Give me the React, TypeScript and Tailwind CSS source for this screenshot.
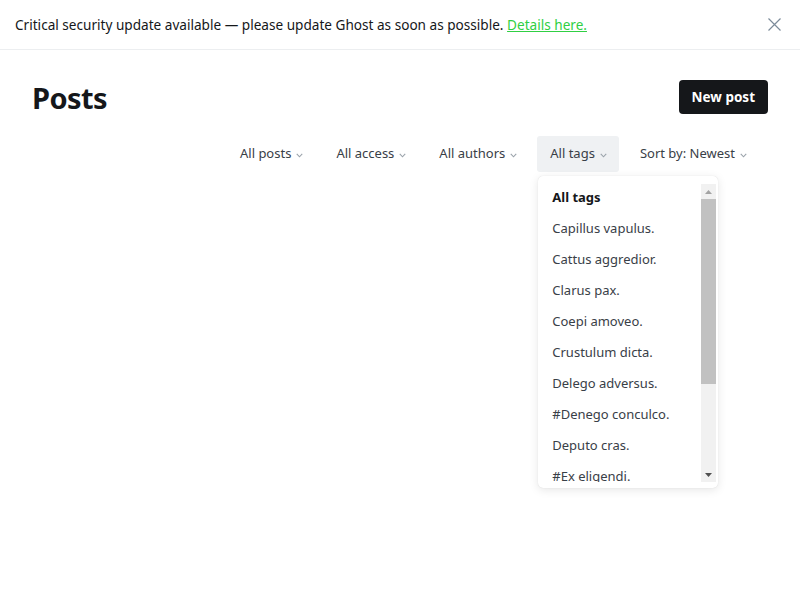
const filters = ["All posts", "All access", "All authors", "All tags", "Sort by: Newest"];

const tags = [
  "Capillus vapulus.",
  "Cattus aggredior.",
  "Clarus pax.",
  "Coepi amoveo.",
  "Crustulum dicta.",
  "Delego adversus.",
  "#Denego conculco.",
  "Deputo cras.",
  "#Ex eligendi.",
  "Fugit tempora.",
  "Laborum utilis.",
  "Nostrum vicinus.",
  "Sordeo tenus.",
];

function Chevron() {
  return (
    <svg width="7" height="5" viewBox="0 0 7 5" fill="none" className="mt-[2px]">
      <path d="M0.75 0.9 L3.5 3.8 L6.25 0.9" stroke="#9ba3ab" strokeWidth="1.1" />
    </svg>
  );
}

function Scrollbar() {
  return (
    <div className="mt-[2px] flex h-[298px] w-[15px] flex-col bg-[#f1f1f1]">
      <div className="flex h-[15px] items-center justify-center">
        <svg width="7" height="4" viewBox="0 0 7 4">
          <path d="M0 4 L3.5 0 L7 4 Z" fill="#a3a3a3" />
        </svg>
      </div>
      <div className="flex-1">
        <div className="h-[185px] bg-[#c1c1c1]" />
      </div>
      <div className="flex h-[15px] items-center justify-center">
        <svg width="7" height="4" viewBox="0 0 7 4">
          <path d="M0 0 L3.5 4 L7 0 Z" fill="#505050" />
        </svg>
      </div>
    </div>
  );
}

export default function App() {
  return (
    <div className="min-h-[600px] bg-white font-['Noto_Sans',sans-serif] text-[#15171a]">
      <div className="flex h-[50px] items-center justify-between border-b border-[#eceef0] pl-[15px] pr-[19px] text-[13.6px]">
        <p className="pt-px">
          Critical security update available — please update Ghost as soon as possible.{" "}
          <a href="#" className="text-[#30cf43] underline">
            Details here.
          </a>
        </p>
        <svg width="13" height="13" viewBox="0 0 13 13" fill="none">
          <path d="M0.5 0.5 L12.5 12.5 M12.5 0.5 L0.5 12.5" stroke="#7c8b9a" strokeWidth="1.2" />
        </svg>
      </div>

      <div className="px-8">
        <div className="flex items-center justify-between pt-[30px]">
          <h1 className="text-[29px] font-bold leading-none tracking-[-0.02em]">Posts</h1>
          <button className="h-[34px] rounded-[4px] bg-[#15171a] px-[13px] text-[13.5px] font-bold text-white">
            New post
          </button>
        </div>

        <div className="mt-[22px] flex justify-end gap-2 pr-[9px]">
          {filters.map((f) => (
            <div key={f} className="relative">
              <button
                className={
                  "flex h-9 items-center gap-[5px] rounded-[3px] pl-[13px] pr-[12px] text-[13px] text-[#394047] " +
                  (f === "All tags" ? "bg-[#eff1f3]" : "")
                }
              >
                {f}
                <Chevron />
              </button>
              {f === "All tags" && (
                <div className="absolute left-px top-10 z-10 flex w-[180px] rounded-[5px] bg-white pb-[6px] pr-[2px] pt-[6px] shadow-[0_0_1px_rgba(0,0,0,0.15),0_2px_10px_rgba(0,0,0,0.1)]">
                  <ul className="h-[300px] flex-1 overflow-hidden text-[13px] text-[#394047]">
                    <li className="flex h-[31px] items-center px-[14px] font-bold text-[#15171a]">All tags</li>
                    {tags.map((t) => (
                      <li key={t} className="flex h-[31px] items-center px-[14px]">
                        {t}
                      </li>
                    ))}
                  </ul>
                  <Scrollbar />
                </div>
              )}
            </div>
          ))}
        </div>
      </div>
    </div>
  );
}
